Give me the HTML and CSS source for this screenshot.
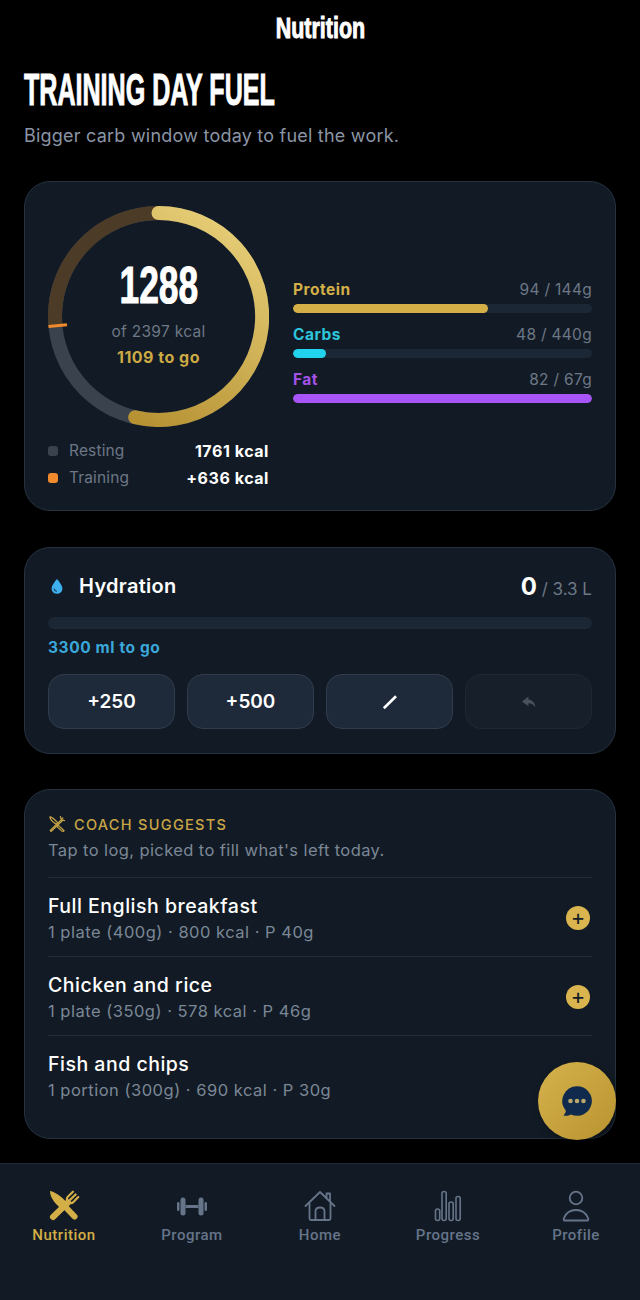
FILE: index.html
```html
<!DOCTYPE html>
<html lang="en">
  <head>
    <meta charset="UTF-8" />
    <meta name="viewport" content="width=device-width, initial-scale=1.0" />
    <title>Nutrition</title>
    <link rel="stylesheet" href="styles.css">
  </head>
  <body>
    <div class="page">
      <header class="topbar"><span class="display topbar-title">Nutrition</span></header>

      <main class="content">
        <h1 class="display page-title">TRAINING DAY FUEL</h1>
        <p class="page-sub">Bigger carb window today to fuel the work.</p>

        <!-- calories -->
        <section class="card card-fuel">
          <div class="fuel-left">
            <div class="ring">
              <svg width="221" height="221" viewBox="0 0 221 221">
                <defs>
                  <linearGradient id="goldArc" gradientUnits="userSpaceOnUse" x1="190" y1="20" x2="70" y2="215">
                    <stop offset="0" stop-color="#e6cd76" />
                    <stop offset="1" stop-color="#b48f30" />
                  </linearGradient>
                </defs>
                <circle cx="110.5" cy="110.5" r="103.5" fill="none" stroke="#3a424e" stroke-width="14" />
                <path d="M7.4 119.9 A103.5 103.5 0 0 1 110.5 7" fill="none" stroke="#4c3c27" stroke-width="14" />
                <path d="M110.5 7 A103.5 103.5 0 1 1 87.2 211.3" fill="none" stroke="url(#goldArc)" stroke-width="14" stroke-linecap="round" />
                <line x1="0.5" y1="120.6" x2="19" y2="118.8" stroke="#f08a2c" stroke-width="3" />
              </svg>
              <div class="ring-text">
                <div class="display ring-num">1288</div>
                <div class="ring-of">of 2397 kcal</div>
                <div class="ring-go">1109 to go</div>
              </div>
            </div>
            <div class="legend">
              <div class="legend-row">
                <span class="dot dot-rest"></span><span class="legend-label">Resting</span><span class="legend-val">1761 kcal</span>
              </div>
              <div class="legend-row">
                <span class="dot dot-train"></span><span class="legend-label">Training</span><span class="legend-val">+636 kcal</span>
              </div>
            </div>
          </div>
          <div class="macros">
            <div class="macro">
              <div class="macro-head"><span class="macro-name c-protein">Protein</span><span class="macro-val">94 / 144g</span></div>
              <div class="bar"><div class="bar-fill bg-protein" style="width: 65.3%"></div></div>
            </div>
            <div class="macro">
              <div class="macro-head"><span class="macro-name c-carbs">Carbs</span><span class="macro-val">48 / 440g</span></div>
              <div class="bar"><div class="bar-fill bg-carbs" style="width: 10.9%"></div></div>
            </div>
            <div class="macro">
              <div class="macro-head"><span class="macro-name c-fat">Fat</span><span class="macro-val">82 / 67g</span></div>
              <div class="bar"><div class="bar-fill bg-fat" style="width: 100%"></div></div>
            </div>
          </div>
        </section>

        <!-- hydration -->
        <section class="card card-water">
          <div class="water-head">
            <div class="water-title">
              <svg width="18" height="18" viewBox="0 0 18 18"><path d="M9 2 C9 2 3.6 8 3.6 11.4 A5.4 5.4 0 0 0 14.4 11.4 C14.4 8 9 2 9 2 Z" fill="#3fb0ee" /><path d="M6.2 11.4 A2.9 2.9 0 0 0 9 14.2" fill="none" stroke="#16435f" stroke-width="1.1" /></svg>
              <span>Hydration</span>
            </div>
            <div class="water-total"><b>0</b> / 3.3 L</div>
          </div>
          <div class="water-track"></div>
          <div class="water-go">3300 ml to go</div>
          <div class="water-btns">
            <button class="wbtn">+250</button>
            <button class="wbtn">+500</button>
            <button class="wbtn">
              <svg width="18" height="18" viewBox="0 0 18 18"><path d="M2.8 15.2 L15 3.2" fill="none" stroke="#fff" stroke-width="2.6" /></svg>
            </button>
            <button class="wbtn wbtn-off">
              <svg width="18" height="18" viewBox="0 0 18 18"><path d="M8.4 3.4 L2 8.8 L8.4 13 V10.2 C11.4 10.2 13.6 11.4 15.4 14.4 C15 10 12.4 7 8.4 6.6 Z" fill="#48525f" /></svg>
            </button>
          </div>
        </section>

        <!-- coach -->
        <section class="card card-coach">
          <div class="coach-head">
            <svg width="18" height="18" viewBox="0 0 24 24" fill="none" stroke="#c9a545" stroke-width="1.6" stroke-linejoin="round" stroke-linecap="round">
              <path d="M2.5 2.5 C6 3 10 7 13 10.5 L11 12.5 L10 11.5 C6.500 9.500 3 6 2.500 2.500 Z" />
              <path d="M13.500 13.500 L21.500 21 L20 22 C17.800 22 15.500 18 11.800 15.200 Z" />
              <path d="M16.500 2 L17.800 6.200 M22 7.500 L17.800 6.200 M19.800 3.800 L17.800 6.200 M17.800 6.200 L3 20.500 L4 22 L19 7.600" />
            </svg>
            <span>COACH SUGGESTS</span>
          </div>
          <p class="coach-sub">Tap to log, picked to fill what's left today.</p>
          <div class="food">
            <div><div class="food-name">Full English breakfast</div><div class="food-meta">1 plate (400g) · 800 kcal · P 40g</div></div>
            <button class="add">+</button>
          </div>
          <div class="food">
            <div><div class="food-name">Chicken and rice</div><div class="food-meta">1 plate (350g) · 578 kcal · P 46g</div></div>
            <button class="add">+</button>
          </div>
          <div class="food">
            <div><div class="food-name">Fish and chips</div><div class="food-meta">1 portion (300g) · 690 kcal · P 30g</div></div>
            <button class="add">+</button>
          </div>
        </section>
      </main>

      <button class="fab">
        <svg width="32" height="32" viewBox="0 0 32 32">
          <path d="M16 1.200 A14.800 14.800 0 1 1 10 29.500 C8 30.800 5 31 2.500 30.600 C4 29 4.800 27 4.800 25.500 A14.800 14.800 0 0 1 16 1.200 Z" fill="#0f2a4d" />
          <circle cx="9.500" cy="16" r="2.300" fill="#b9a76a" />
          <circle cx="16" cy="16" r="2.300" fill="#b9a76a" />
          <circle cx="22.500" cy="16" r="2.300" fill="#b9a76a" />
        </svg>
      </button>

      <nav class="tabs">
        <a class="tab tab-on">
          <svg width="32" height="32" viewBox="0 0 32 32" fill="#d4ae47">
            <!-- knife -->
            <path d="M2 1 C8 2 16 8.500 21 15 L15.500 20.500 C9 15.500 2 9 2 1 Z" />
            <path d="M17 16.500 L26.500 26.500" fill="none" stroke="#d4ae47" stroke-width="6" stroke-linecap="round" />
            <!-- fork -->
            <path d="M5 27 L20 12.500" fill="none" stroke="#d4ae47" stroke-width="6" stroke-linecap="round" />
            <g transform="translate(23 9) rotate(45)" fill="none" stroke="#d4ae47" stroke-width="2.200" stroke-linecap="round">
              <path d="M-3.800 -6.500 V0 Q-3.800 4 0 4 Q3.800 4 3.800 0 V-6.500" />
              <path d="M0 -6.500 V4" />
            </g>
          </svg>
          <span>Nutrition</span>
        </a>
        <a class="tab">
          <svg width="32" height="32" viewBox="0 0 32 32" fill="#66748a">
            <rect x="1" y="12" width="2.500" height="9" rx="1.200" />
            <rect x="4.500" y="7.500" width="5" height="18" rx="2.500" />
            <rect x="9.500" y="15" width="13" height="3" />
            <rect x="22.500" y="7.500" width="5" height="18" rx="2.500" />
            <rect x="28.500" y="12" width="2.500" height="9" rx="1.200" />
          </svg>
          <span>Program</span>
        </a>
        <a class="tab">
          <svg width="32" height="32" viewBox="0 0 32 32" fill="none" stroke="#66748a" stroke-width="1.800" stroke-linejoin="round" stroke-linecap="round">
            <path d="M1.500 16 L16 2 L30.500 16 M5.500 13.500 V28.500 Q5.500 30 7 30 H25 Q26.500 30 26.500 28.500 V13.500" />
            <path d="M11.500 30 V21.500 Q11.500 17.500 16 17.500 Q20.500 17.500 20.500 21.500 V30" />
            <path d="M22.500 8 V3.500 H26 V11.500" />
          </svg>
          <span>Home</span>
        </a>
        <a class="tab">
          <svg width="32" height="32" viewBox="0 0 32 32" fill="none" stroke="#66748a" stroke-width="1.600">
            <rect x="3.500" y="19" width="4.200" height="11.500" rx="2" />
            <rect x="10" y="1.500" width="4.200" height="29" rx="2" />
            <rect x="17" y="12" width="4.200" height="18.500" rx="2" />
            <rect x="24" y="6.500" width="4.200" height="24" rx="2" />
          </svg>
          <span>Progress</span>
        </a>
        <a class="tab">
          <svg width="32" height="32" viewBox="0 0 32 32" fill="none" stroke="#66748a" stroke-width="1.800">
            <circle cx="16" cy="8" r="6.300" />
            <path d="M4.500 30.500 C3.500 30.500 3.500 29 4 28 C6 23 10.500 20 16 20 C21.500 20 26 23 28 28 C28.500 29 28.500 30.500 27.500 30.500 Z" stroke-linejoin="round" />
          </svg>
          <span>Profile</span>
        </a>
      </nav>
    </div>
  </body>
</html>
```

FILE: styles.css
```css
* {
  box-sizing: border-box;
}

body {
  margin: 0;
  background-color: #000;
  color: #fff;
  font-family: "Inter", "Liberation Sans", sans-serif;
}

.page {
  position: relative;
  width: 640px;
  height: 1300px;
  display: flex;
  flex-direction: column;
  overflow: hidden;
}

.display {
  font-family: "Liberation Sans Narrow", "Liberation Sans", sans-serif;
  font-weight: 700;
  -webkit-text-stroke: 1px #fff;
}

.topbar {
  height: 56px;
  display: flex;
  justify-content: center;
  align-items: center;
}

.topbar-title {
  font-size: 29px;
  transform: scaleX(0.74);
}

.content {
  flex: 1;
  padding: 0 24px;
}

.page-title {
  margin: 11px 0 0;
  font-size: 44px;
  line-height: 46px;
  transform: scaleX(0.57);
  transform-origin: left center;
  white-space: nowrap;
}

.page-sub {
  margin: 11px 0 0;
  font-size: 18px;
  line-height: 24px;
  letter-spacing: 0.22px;
  color: #8b95a5;
}

.card {
  background-color: #121b25;
  border: 1px solid #263240;
  border-radius: 26px;
  padding: 0 23px;
}

.card-fuel {
  margin-top: 33px;
  height: 330px;
  display: flex;
  gap: 24px;
  padding-top: 24px;
}

.fuel-left {
  width: 221px;
  flex-shrink: 0;
}

.ring {
  position: relative;
  width: 221px;
  height: 221px;
}

.ring svg {
  display: block;
}

.ring-text {
  position: absolute;
  inset: 0;
  display: flex;
  flex-direction: column;
  align-items: center;
  padding-top: 50px;
}

.ring-num {
  font-size: 52px;
  line-height: 58px;
  transform: scaleX(0.68);
}

.ring-of {
  margin-top: 6px;
  font-size: 15.5px;
  line-height: 24px;
  letter-spacing: 0.3px;
  color: #6d7786;
}

.ring-go {
  margin-top: 1px;
  font-size: 16px;
  font-weight: 700;
  line-height: 24px;
  letter-spacing: 0.5px;
  color: #cca944;
}

.legend {
  margin-top: 10px;
}

.legend-row {
  display: flex;
  align-items: center;
  height: 27px;
  font-size: 15.5px;
}

.dot {
  width: 10px;
  height: 10px;
  border-radius: 3px;
  margin-right: 11px;
}

.dot-rest {
  background-color: #3a424e;
}

.dot-train {
  background-color: #f08a2c;
}

.legend-label {
  flex: 1;
  letter-spacing: 0.15px;
  color: #6d7786;
}

.legend-val {
  font-size: 16px;
  font-weight: 700;
  letter-spacing: 0.55px;
}

.macros {
  flex: 1;
  padding-top: 72px;
}

.macro {
  margin-bottom: 10px;
}

.macro-head {
  display: flex;
  justify-content: space-between;
  align-items: center;
  height: 22px;
  margin-bottom: 4px;
  font-size: 15.5px;
}

.macro-name {
  font-weight: 700;
  letter-spacing: 0.5px;
}

.macro-val {
  letter-spacing: 0.3px;
  color: #6d7786;
}

.c-protein {
  color: #d4ae47;
}

.c-carbs {
  color: #2cc5dc;
}

.c-fat {
  color: #a352e8;
}

.bar {
  height: 9px;
  background-color: #1c2735;
  border-radius: 5px;
  overflow: hidden;
}

.bar-fill {
  height: 100%;
  border-radius: 5px;
}

.bg-protein {
  background-color: #d4ae47;
}

.bg-carbs {
  background-color: #22d3ee;
}

.bg-fat {
  background-color: #a855f7;
}

.card-water {
  margin-top: 36px;
  height: 207px;
  padding-top: 24px;
}

.water-head {
  display: flex;
  justify-content: space-between;
  align-items: center;
  height: 28px;
}

.water-title {
  display: flex;
  align-items: center;
  gap: 13px;
  font-size: 20px;
  font-weight: 600;
  letter-spacing: 0.3px;
}

.water-total {
  font-size: 17px;
  color: #6d7786;
}

.water-total b {
  font-size: 24px;
  color: #fff;
}

.water-track {
  height: 12px;
  margin-top: 17px;
  background-color: #1c2735;
  border-radius: 6px;
}

.water-go {
  margin-top: 7px;
  font-size: 15.5px;
  font-weight: 700;
  line-height: 24px;
  letter-spacing: 0.6px;
  color: #3ba8dc;
}

.water-btns {
  display: grid;
  grid-template-columns: repeat(4, 1fr);
  gap: 12px;
  margin-top: 14px;
}

.wbtn {
  height: 55px;
  display: flex;
  justify-content: center;
  align-items: center;
  background-color: #1e2a3a;
  border: 1px solid #303c4c;
  border-radius: 16px;
  color: #fff;
  font-family: inherit;
  font-size: 19px;
  font-weight: 600;
}

.wbtn-off {
  background-color: #161f2a;
  border-color: #1e2833;
}

.card-coach {
  margin-top: 35px;
  height: 350px;
  padding-top: 24px;
}

.coach-head {
  display: flex;
  align-items: center;
  gap: 8px;
  height: 20px;
  font-size: 14.5px;
  font-weight: 500;
  letter-spacing: 1.3px;
  color: #c9a545;
}

.coach-sub {
  margin: 5px 0 16px;
  font-size: 16.5px;
  line-height: 22px;
  letter-spacing: 0.4px;
  color: #7b8796;
}

.food {
  display: flex;
  justify-content: space-between;
  align-items: center;
  height: 79px;
  padding-top: 3px;
  padding-right: 2px;
  border-top: 1px solid #232e3b;
}

.food-name {
  font-size: 19.5px;
  font-weight: 500;
  line-height: 26px;
  letter-spacing: 0.5px;
}

.food-meta {
  font-size: 16.5px;
  line-height: 26px;
  letter-spacing: 0.5px;
  color: #7b8796;
}

.add {
  width: 24px;
  height: 24px;
  padding: 0;
  margin-bottom: 2px;
  border: none;
  border-radius: 50%;
  background-color: #d9b44f;
  color: #121b25;
  font-family: inherit;
  font-size: 22px;
  line-height: 23px;
}

.fab {
  position: absolute;
  left: 538px;
  top: 1062px;
  width: 78px;
  height: 78px;
  display: flex;
  justify-content: center;
  align-items: center;
  padding: 0;
  border: none;
  border-radius: 50%;
  background: linear-gradient(135deg, #d6b24d, #b8932f);
  box-shadow: 3px 4px 10px rgba(0, 0, 0, 0.4);
}

.tabs {
  height: 137px;
  display: grid;
  grid-template-columns: repeat(5, 1fr);
  padding-top: 26px;
  background-color: #121b25;
  border-top: 1px solid #1f2a37;
}

.tab {
  display: flex;
  flex-direction: column;
  align-items: center;
  gap: 4px;
  font-family: "Roboto", sans-serif;
  font-size: 15px;
  font-weight: 500;
  letter-spacing: 0.5px;
  color: #66748a;
}

.tab svg {
  display: block;
}

.tab-on {
  color: #d4ae47;
}
```
